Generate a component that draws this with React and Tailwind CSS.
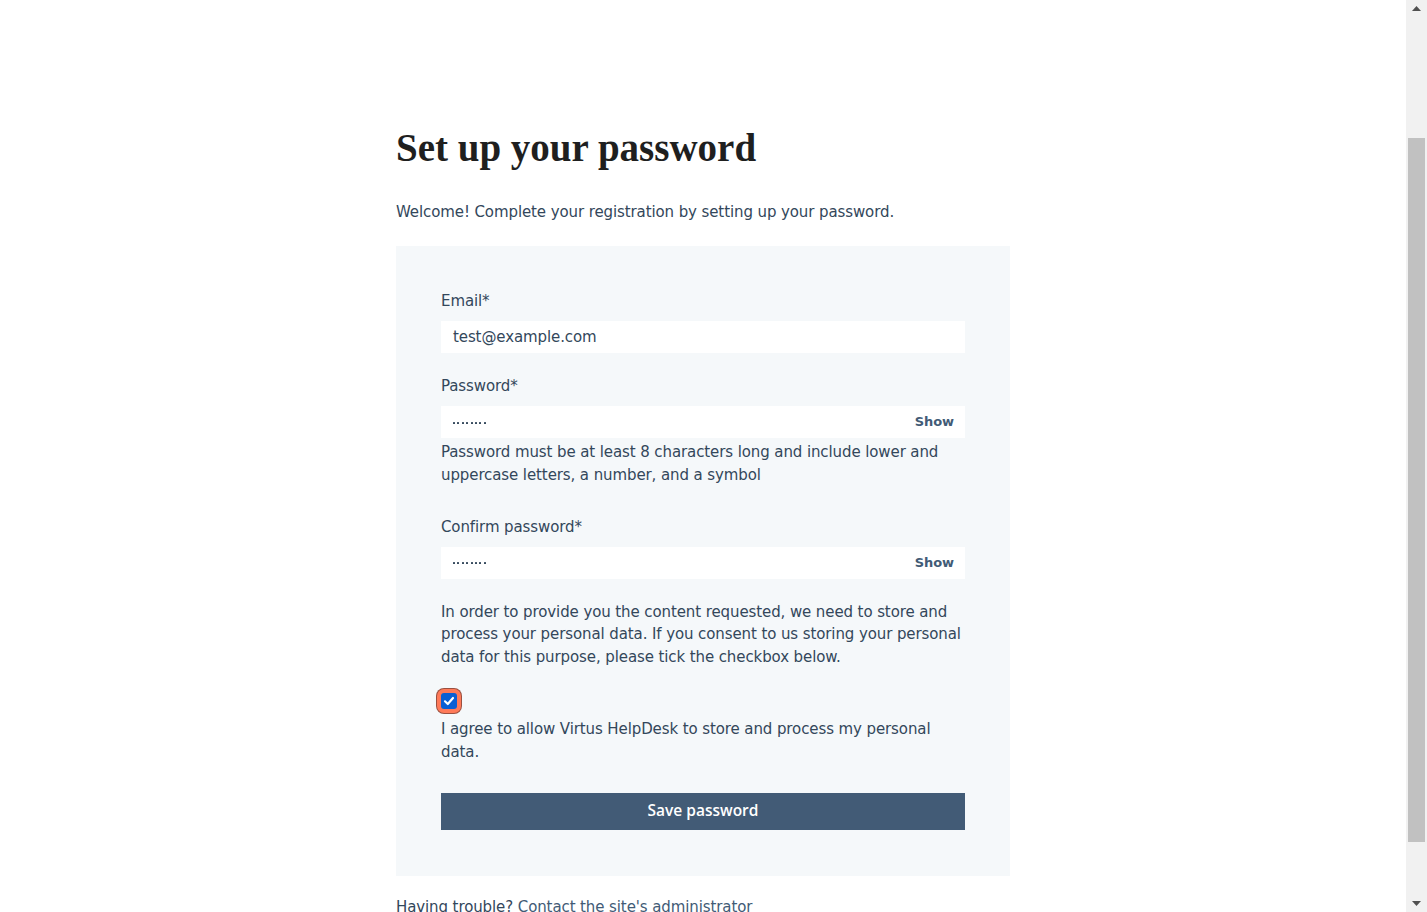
import { useLayoutEffect } from "react";

function Dots() {
  return (
    <span className="flex gap-[2.4px] items-center mt-[1px]">
      {[0, 1, 2, 3, 4, 5, 6, 7].map((i) => (
        <span key={i} className="w-[2px] h-[2px] bg-[#33475b] rounded-[0.5px]" />
      ))}
    </span>
  );
}

function Field({ label, value, show, className = "" }) {
  return (
    <div className={className}>
      <div className="text-[15px] leading-[22.5px] text-[#33475b] mb-[8.5px]">{label}</div>
      <div className="h-[32px] bg-white flex items-center justify-between pl-[12px] pr-[11px]">
        {show ? <Dots /> : <span className="text-[15px] text-[#33475b]">{value}</span>}
        {show && <span className="text-[13px] font-bold text-[#425b76]">Show</span>}
      </div>
    </div>
  );
}

function FakeScrollbar() {
  return (
    <div className="fixed top-0 right-0 w-[21px] h-[912px] bg-[#f1f1f1] flex flex-col items-center">
      <div className="h-[17px] w-full flex items-center justify-center">
        <svg width="9" height="5" viewBox="0 0 9 5"><path d="M0 5 L4.5 0 L9 5 Z" fill="#505050" /></svg>
      </div>
      <div className="mt-[121px] w-[17px] h-[704px] bg-[#c1c1c1]" />
      <div className="flex-1" />
      <div className="h-[17px] w-full flex items-center justify-center">
        <svg width="9" height="5" viewBox="0 0 9 5"><path d="M0 0 L4.5 5 L9 0 Z" fill="#505050" /></svg>
      </div>
    </div>
  );
}

export default function App() {
  useLayoutEffect(() => {
    window.scrollTo(0, 157);
  }, []);
  return (
    <div className="min-h-[1137px] bg-white pr-[21px] font-['DejaVu_Sans',sans-serif] text-[#33475b] tracking-[-0.1px]">
      <div className="w-[614px] mx-auto pt-[281px] pb-[60px]">
        <h1 className="font-['Liberation_Serif',serif] font-bold text-[39px] leading-[48px] tracking-normal text-[#1f1f1f]">
          Set up your password
        </h1>
        <p className="mt-[29px] text-[15px] leading-[22.5px]">
          Welcome! Complete your registration by setting up your password.
        </p>
        <div className="mt-[22.5px] bg-[#f5f8fa] px-[45px] pt-[44px] pb-[46px]">
          <Field label="Email*" value="test@example.com" />
          <Field label="Password*" value="" show className="mt-[22px]" />
          <p className="mt-[2.5px] text-[15px] leading-[23px]">
            Password must be at least 8 characters long and include lower and uppercase letters, a number, and a symbol
          </p>
          <Field label="Confirm password*" value="" show className="mt-[29px]" />
          <p className="mt-[22px] text-[15px] leading-[22.5px]">
            In order to provide you the content requested, we need to store and process your personal data. If you consent to us storing your personal data for this purpose, please tick the checkbox below.
          </p>
          <div className="mt-[21px] flex">
            <div className="ml-[-4px] p-[4px] rounded-[7px] bg-[#ff7a59] shadow-[0_0_0_1px_#9a5040]">
              <div className="w-[16px] h-[16px] rounded-[3px] bg-[#0b5fd4] flex items-center justify-center">
                <svg width="12" height="12" viewBox="0 0 12 12" fill="none">
                  <path d="M2 6.3 L4.8 9 L10 3" stroke="white" strokeWidth="2.2" strokeLinecap="round" strokeLinejoin="round" />
                </svg>
              </div>
            </div>
          </div>
          <p className="mt-[5px] text-[15px] leading-[22.5px]">
            I agree to allow Virtus HelpDesk to store and process my personal data.
          </p>
          <button className="mt-[29.5px] w-full h-[37px] bg-[#425b76] text-white text-[15.5px] font-semibold font-['Open_Sans',sans-serif] tracking-normal">
            Save password
          </button>
        </div>
        <p className="mt-[20px] text-[15px] leading-[22.5px]">
          Having trouble? <span className="text-[#425b76]">Contact the site's administrator</span>
        </p>
      </div>
      <FakeScrollbar />
    </div>
  );
}
